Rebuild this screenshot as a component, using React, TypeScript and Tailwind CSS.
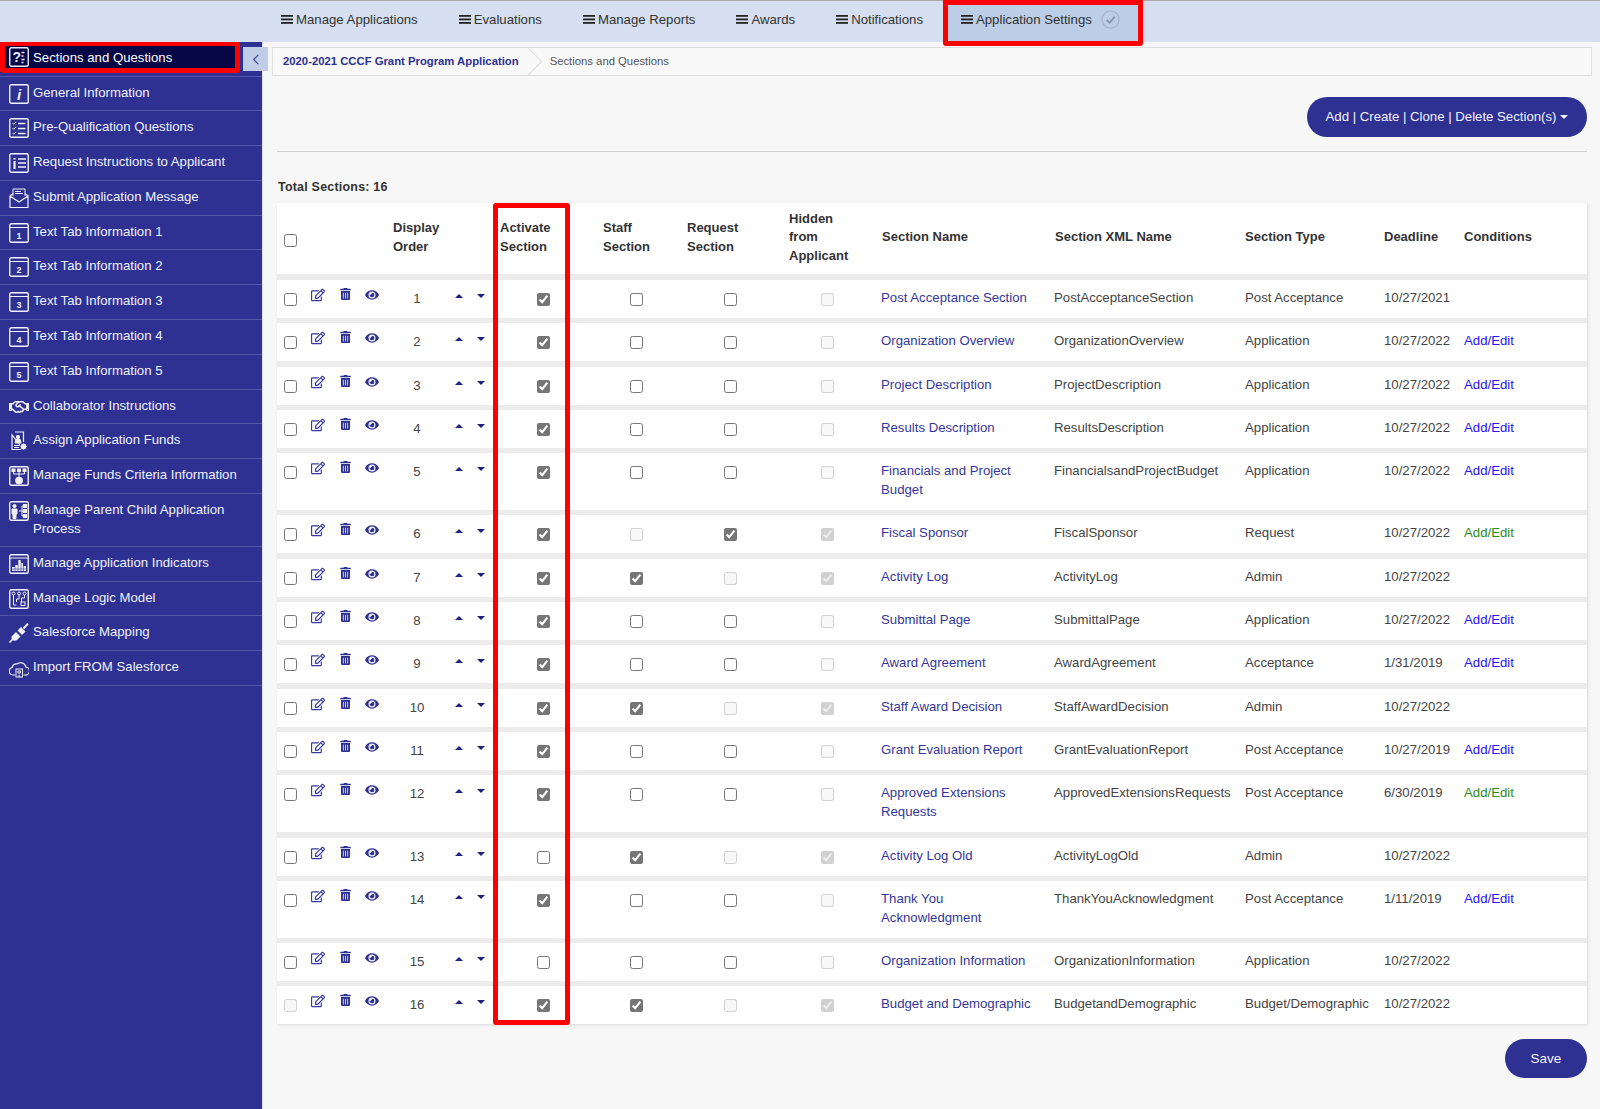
import { FaEye, FaRegEdit, FaRegHandshake, FaTrashAlt } from 'react-icons/fa';

const GRID =
  'grid grid-cols-[26px_30px_24px_30px_58px_28px_16px_108px_78px_110px_84px_176px_191px_139px_80px_132px] items-start';

const Box = ({ children }: { children: React.ReactNode }) => (
  <svg viewBox="0 0 20 20" className="h-5 w-5 shrink-0" fill="none" stroke="currentColor" strokeWidth="1">
    <rect x="0.75" y="0.75" width="18.5" height="18.5" rx="1.5" strokeWidth="1.4" />
    {children}
  </svg>
);

const Tab = ({ n }: { n: string }) => (
  <Box>
    <path d="M1 4.5h18" />
    <text x="10" y="15.5" textAnchor="middle" fontSize="9" fontWeight="700" fill="currentColor" stroke="none">
      {n}
    </text>
  </Box>
);

const Plain = ({ children }: { children: React.ReactNode }) => (
  <svg viewBox="0 0 20 20" className="h-5 w-5 shrink-0" fill="none" stroke="currentColor" strokeWidth="1">
    {children}
  </svg>
);

const icons: Record<string, React.ReactNode> = {
  sections: (
    <Box>
      <text x="3.5" y="15" fontSize="14" fontWeight="700" fill="currentColor" stroke="none">?</text>
      <path d="M12.5 5.5h3M12.5 9h2M12.5 12.5h3M12.5 15.5h2" strokeWidth="1.6" />
    </Box>
  ),
  info: (
    <Box>
      <text x="10" y="15.5" textAnchor="middle" fontSize="15" fontWeight="700" fontStyle="italic" fill="currentColor" stroke="none">i</text>
    </Box>
  ),
  prequal: (
    <Box>
      <path d="M3.5 5l1.3 1.3L7 3.8M3.5 10l1.3 1.3L7 8.8M3.5 15l1.3 1.3L7 13.8" />
      <path d="M9 5.5h7.5M9 10.5h7.5M9 15.5h7.5" strokeWidth="1.4" />
    </Box>
  ),
  request: (
    <Box>
      <text x="5.5" y="15.5" textAnchor="middle" fontSize="14" fontWeight="700" fill="currentColor" stroke="none">i</text>
      <path d="M9 6h8M9 10h8M9 14h8" strokeWidth="1.6" />
    </Box>
  ),
  submit: (
    <Plain>
      <path d="M4 8V1h12v7" />
      <path d="M6 3.5h6M6 5.5h8" />
      <path d="M1 7.5v12h18v-12l-3-1.5M1 7.5l3-1.5M1 8l9 6 9-6" strokeWidth="1.2" />
    </Plain>
  ),
  hands: <FaRegHandshake className="h-5 w-5 shrink-0" />,
  assign: (
    <Plain>
      <path d="M6 1h8.5v10M14.5 18.5H3V4z" strokeWidth="1.2" />
      <circle cx="9" cy="6" r="1.7" fill="currentColor" />
      <path d="M6 12l.8-3.5h4.4L12 12zM5 14.5h6M5 16.5h5" fill="currentColor" />
      <circle cx="14.5" cy="15.5" r="3.5" fill="currentColor" stroke="#2e3192" />
    </Plain>
  ),
  criteria: (
    <Box>
      <rect x="3" y="3" width="3" height="2.5" fill="currentColor" />
      <rect x="8.5" y="3" width="3" height="2.5" fill="currentColor" />
      <rect x="14" y="3" width="3" height="2.5" fill="currentColor" />
      <path d="M4.5 6v2h11V6M10 6v5" />
      <circle cx="10" cy="14.5" r="3.5" fill="currentColor" />
    </Box>
  ),
  parent: (
    <Box>
      <circle cx="5.5" cy="5" r="1.6" fill="currentColor" />
      <path d="M3 8h5v5H7v4.5H4V13H3z" fill="currentColor" />
      <path d="M10 10h3M13 5v10M13 5h1.5M13 10h1.5M13 15h1.5" />
      <rect x="14.5" y="3.5" width="3" height="3" fill="currentColor" />
      <rect x="14.5" y="8.5" width="3" height="3" fill="currentColor" />
      <rect x="14.5" y="13.5" width="3" height="3" fill="currentColor" />
    </Box>
  ),
  indicators: (
    <Box>
      <path d="M1 4h18" />
      <path d="M3 17v-4h3v-2h3V6h3v3h2v3h3v5z" fill="currentColor" stroke="none" />
      <path d="M3 15h14M6 11v6M9 6v11M12 6v11M14.5 9v8" stroke="#2e3192" strokeWidth="0.6" />
    </Box>
  ),
  logic: (
    <Box>
      <circle cx="4.5" cy="4.5" r="1.5" />
      <circle cx="10" cy="4.5" r="1.5" />
      <circle cx="15.5" cy="4.5" r="1.5" />
      <path d="M4.5 6v10h3M10 6v4H7.5v3M15.5 6v3h-3v4" />
      <rect x="12" y="13" width="4" height="3.5" />
    </Box>
  ),
  plug: (
    <svg viewBox="0 0 20 20" className="h-5 w-5 shrink-0" fill="currentColor" stroke="currentColor">
      <path d="M0.5 19.5l3.5-3.5" strokeWidth="1.6" />
      <path d="M2.5 13.5L7 9l4.5 4.5L8 17a3.5 3.5 0 01-5.5-3.5z" stroke="none" />
      <path d="M8.5 7.5L12 4l4.5 4.5L13 12z" stroke="none" />
      <path d="M14.5 5.5L19 .5" strokeWidth="2" />
    </svg>
  ),
  cloud: (
    <Plain>
      <path d="M6 17H4a3.8 3.8 0 01-.8-7.5A4.5 4.5 0 018 6a5.5 5.5 0 019 3.2A3.9 3.9 0 0116 17h-1.5" strokeWidth="1.2" />
      <rect x="7" y="11" width="6.5" height="8" />
      <path d="M9 13h2.5v2H9zM10.2 16.5v2.5" />
    </Plain>
  ),
};

const navItems = [
  { label: 'General Information', icon: 'info' },
  { label: 'Pre-Qualification Questions', icon: 'prequal' },
  { label: 'Request Instructions to Applicant', icon: 'request' },
  { label: 'Submit Application Message', icon: 'submit' },
  { label: 'Text Tab Information 1', tab: '1' },
  { label: 'Text Tab Information 2', tab: '2' },
  { label: 'Text Tab Information 3', tab: '3' },
  { label: 'Text Tab Information 4', tab: '4' },
  { label: 'Text Tab Information 5', tab: '5' },
  { label: 'Collaborator Instructions', icon: 'hands' },
  { label: 'Assign Application Funds', icon: 'assign' },
  { label: 'Manage Funds Criteria Information', icon: 'criteria' },
  { label: 'Manage Parent Child Application Process', icon: 'parent' },
  { label: 'Manage Application Indicators', icon: 'indicators' },
  { label: 'Manage Logic Model', icon: 'logic' },
  { label: 'Salesforce Mapping', icon: 'plug' },
  { label: 'Import FROM Salesforce', icon: 'cloud' },
];

type Row = {
  name: string;
  xml: string;
  type: string;
  deadline: string;
  cond?: 'blue' | 'green';
  active?: boolean;
  staff?: boolean;
  request?: boolean;
  locked?: boolean; // request locked, hidden ticked
  noSelect?: boolean;
};

const rows: Row[] = [
  { name: 'Post Acceptance Section', xml: 'PostAcceptanceSection', type: 'Post Acceptance', deadline: '10/27/2021', active: true },
  { name: 'Organization Overview', xml: 'OrganizationOverview', type: 'Application', deadline: '10/27/2022', cond: 'blue', active: true },
  { name: 'Project Description', xml: 'ProjectDescription', type: 'Application', deadline: '10/27/2022', cond: 'blue', active: true },
  { name: 'Results Description', xml: 'ResultsDescription', type: 'Application', deadline: '10/27/2022', cond: 'blue', active: true },
  { name: 'Financials and Project Budget', xml: 'FinancialsandProjectBudget', type: 'Application', deadline: '10/27/2022', cond: 'blue', active: true },
  { name: 'Fiscal Sponsor', xml: 'FiscalSponsor', type: 'Request', deadline: '10/27/2022', cond: 'green', active: true, request: true },
  { name: 'Activity Log', xml: 'ActivityLog', type: 'Admin', deadline: '10/27/2022', active: true, staff: true, locked: true },
  { name: 'Submittal Page', xml: 'SubmittalPage', type: 'Application', deadline: '10/27/2022', cond: 'blue', active: true },
  { name: 'Award Agreement', xml: 'AwardAgreement', type: 'Acceptance', deadline: '1/31/2019', cond: 'blue', active: true },
  { name: 'Staff Award Decision', xml: 'StaffAwardDecision', type: 'Admin', deadline: '10/27/2022', active: true, staff: true, locked: true },
  { name: 'Grant Evaluation Report', xml: 'GrantEvaluationReport', type: 'Post Acceptance', deadline: '10/27/2019', cond: 'blue', active: true },
  { name: 'Approved Extensions Requests', xml: 'ApprovedExtensionsRequests', type: 'Post Acceptance', deadline: '6/30/2019', cond: 'green', active: true },
  { name: 'Activity Log Old', xml: 'ActivityLogOld', type: 'Admin', deadline: '10/27/2022', staff: true, locked: true },
  { name: 'Thank You Acknowledgment', xml: 'ThankYouAcknowledgment', type: 'Post Acceptance', deadline: '1/11/2019', cond: 'blue', active: true },
  { name: 'Organization Information', xml: 'OrganizationInformation', type: 'Application', deadline: '10/27/2022' },
  { name: 'Budget and Demographic', xml: 'BudgetandDemographic', type: 'Budget/Demographic', deadline: '10/27/2022', active: true, staff: true, locked: true, noSelect: true },
];

const Check = ({ checked, disabled }: { checked?: boolean; disabled?: boolean }) => (
  <input
    type="checkbox"
    defaultChecked={checked}
    disabled={disabled}
    className="m-0 h-[13px] w-[13px] accent-[#767676]"
  />
);

const Bars = () => (
  <svg viewBox="0 0 12 9" className="mr-[3px] h-[9px] w-3 shrink-0 fill-[#222]">
    <rect y="0" width="12" height="1.8" />
    <rect y="3.5" width="12" height="1.8" />
    <rect y="7" width="12" height="1.8" />
  </svg>
);

const topMenu = ['Manage Applications', 'Evaluations', 'Manage Reports', 'Awards', 'Notifications'];

const Th = ({ className, children }: { className: string; children: React.ReactNode }) => (
  <div className={`self-center pb-[2px] text-[13px] leading-[18.5px] font-bold text-[#333] ${className}`}>
    {children}
  </div>
);

export default function App() {
  return (
    <div className="flex h-[1109px] w-[1600px] flex-col overflow-hidden bg-[#f7f7f7] font-['Liberation_Sans',Arial,sans-serif] text-[13.2px] leading-[19px] text-[#444]">
      <header className="z-10 flex h-[42px] shrink-0 items-start gap-[41px] border-t border-[#aaa] bg-[#d5dfef] pl-[281px] text-[#333]">
        {topMenu.map((m) => (
          <div key={m} className="flex items-center pt-[9px]">
            <Bars />
            {m}
          </div>
        ))}
        <div className="-ml-[21px] -mt-px flex h-[46px] items-start rounded-b-[3px] border-[5px] border-[#f00] bg-[#bccde6] pt-[5px] pr-[18px] pl-[13px]">
          <div className="flex items-center">
            <Bars />
            Application Settings
            <svg viewBox="0 0 20 20" className="ml-[9px] h-[19px] w-[19px]" fill="none">
              <circle cx="10" cy="10" r="9" stroke="#a3b1ca" strokeWidth="1.2" />
              <path d="M6 10.5l3 3 5.5-6.5" stroke="#8393ad" strokeWidth="1.8" />
            </svg>
          </div>
        </div>
      </header>

      <div className="flex min-h-0 flex-1">
        <aside className="relative w-[263px] shrink-0 border-r border-[#dfe1f0] bg-[#2e3192] text-[#f0f1fb]">
          <div className="h-[34.5px] border-b border-[#5356a8]" />
          <div className="absolute top-[-1px] left-0 flex h-[32px] w-[240px] items-start rounded-[3px] border-[5px] border-[#f00] bg-[#070745] pl-[4px] text-white">
            <div className="flex items-center gap-[4px] pt-[1px] text-[#e8e9f8]">
              {icons.sections}
              <span className="text-white">Sections and Questions</span>
            </div>
          </div>
          <button className="absolute top-[5px] left-[243px] z-10 flex h-[24px] w-[25px] items-center justify-center bg-[#bfcde6]">
            <svg viewBox="0 0 10 14" className="h-[11px] w-[8px]" fill="none" stroke="#3d4a9e" strokeWidth="1.4">
              <path d="M8 1L2 7l6 6" />
            </svg>
          </button>
          {navItems.map((item) => (
            <div
              key={item.label}
              className="flex items-start gap-[4px] border-b border-[#5356a8] pt-[7px] pr-[10px] pb-[6.8px] pl-[9px]"
            >
              {item.tab ? <Tab n={item.tab} /> : icons[item.icon as string]}
              <span className="-mt-[1px] mb-[1px]">{item.label}</span>
            </div>
          ))}
        </aside>

        <main className="relative min-w-0 flex-1 pt-[5px] pr-[8px] pl-[9px]">
          <nav className="flex h-[29px] items-center overflow-hidden border border-[#dedede] bg-[#f9f9f9] text-[11.3px]">
            <span className="pl-[10px] font-bold text-[#2e3192]">2020-2021 CCCF Grant Program Application</span>
            <span className="ml-[-2px] h-[21px] w-[21px] rotate-45 border-t border-r border-[#dedede]" />
            <span className="ml-[12px] text-[#555]">Sections and Questions</span>
          </nav>

          <div className="pr-[5px] pl-[5px]">
            <div className="mt-[21px] flex justify-end">
              <button className="flex h-[40px] w-[280px] items-center justify-center gap-[4px] rounded-full bg-[#2e3192] pb-[2px] text-[13.2px] text-[#f4f4fb]">
                Add | Create | Clone | Delete Section(s)
                <span className="mt-[1px] h-0 w-0 border-x-[4px] border-t-[4px] border-x-transparent border-t-[#f4f4fb]" />
              </button>
            </div>
            <hr className="mt-[14px] border-[#cfcfcf]" />
            <div className="mt-[27px] h-[17px] pl-[1px] text-[12.5px] leading-[17px] font-bold tracking-[0.2px] text-[#333]">
              Total Sections: 16
            </div>
            <div className="mt-[7px] bg-[#ececec] shadow-[1px_1px_3px_rgba(0,0,0,0.12)]">
              <div className={`${GRID} mb-[6px] h-[71px] bg-white`}>
                <div className="mt-[4px] flex justify-center self-center">
                  <Check />
                </div>
                <Th className="col-start-5 pl-[6px]">
                  Display
                  <br />
                  Order
                </Th>
                <Th className="col-start-8 pl-[11px]">
                  Activate
                  <br />
                  Section
                </Th>
                <Th className="col-start-9 pl-[6px]">
                  Staff
                  <br />
                  Section
                </Th>
                <Th className="pl-[12px]">
                  Request
                  <br />
                  Section
                </Th>
                <Th className="pl-[4px]">
                  Hidden
                  <br />
                  from
                  <br />
                  Applicant
                </Th>
                <Th className="pl-[13px]">Section Name</Th>
                <Th className="pl-[10px]">Section XML Name</Th>
                <Th className="pl-[9px]">Section Type</Th>
                <Th className="pl-[9px]">Deadline</Th>
                <Th className="pl-[9px]">Conditions</Th>
              </div>
              <div className="flex flex-col gap-[5.3px]">
                {rows.map((r, i) => (
                  <div key={r.name} className={`${GRID} min-h-[38px] bg-white`}>
                    <div className="flex justify-center pt-[13px]">
                      <Check disabled={r.noSelect} />
                    </div>
                    <div className="flex justify-center pt-[8px] text-[#3438a0]">
                      <FaRegEdit className="h-[14px] w-[14px]" />
                    </div>
                    <div className="flex justify-center pt-[8px] text-[#2e3192]">
                      <FaTrashAlt className="h-[12px] w-[11px]" />
                    </div>
                    <div className="flex justify-center pt-[8px] text-[#2e3192]">
                      <FaEye className="h-[14px] w-[14px]" />
                    </div>
                    <div className="pt-[9px] pl-[2px] text-center">{i + 1}</div>
                    <div className="flex justify-center pt-[14px]">
                      <span className="h-0 w-0 border-x-[4px] border-b-[4px] border-x-transparent border-b-[#1e2080]" />
                    </div>
                    <div className="flex justify-center pt-[14px]">
                      <span className="h-0 w-0 border-x-[4px] border-t-[4px] border-x-transparent border-t-[#1e2080]" />
                    </div>
                    <div className="flex justify-center pt-[13px]">
                      <Check checked={r.active} />
                    </div>
                    <div className="flex justify-center pt-[13px]">
                      <Check checked={r.staff} disabled={r.request} />
                    </div>
                    <div className="flex justify-center pt-[13px]">
                      <Check checked={r.request} disabled={r.locked} />
                    </div>
                    <div className="flex justify-center pt-[13px]">
                      <Check checked={r.locked || r.request} disabled />
                    </div>
                    <div className="pt-[8px] pr-[4px] pb-[11px] pl-[12px] text-[#34379a]">{r.name}</div>
                    <div className="pt-[8px] pl-[9px]">{r.xml}</div>
                    <div className="pt-[8px] pl-[9px]">{r.type}</div>
                    <div className="pt-[8px] pl-[9px]">{r.deadline}</div>
                    <div className="pt-[8px] pl-[9px]">
                      {r.cond === 'blue' && <span className="text-[#2a12ff]">Add/Edit</span>}
                      {r.cond === 'green' && <span className="text-[#2e8b1a]">Add/Edit</span>}
                    </div>
                  </div>
                ))}
              </div>
            </div>
            <div className="mt-[15px] flex justify-end">
              <button className="h-[39px] w-[82px] rounded-full bg-[#2e3192] text-[13.5px] text-[#f4f4fb]">Save</button>
            </div>
          </div>

          {/* highlight drawn over the Activate column */}
          <div className="pointer-events-none absolute top-[161px] left-[230px] h-[822px] w-[77px] rounded-[3px] border-[5px] border-[#f00]" />
        </main>
      </div>
    </div>
  );
}
